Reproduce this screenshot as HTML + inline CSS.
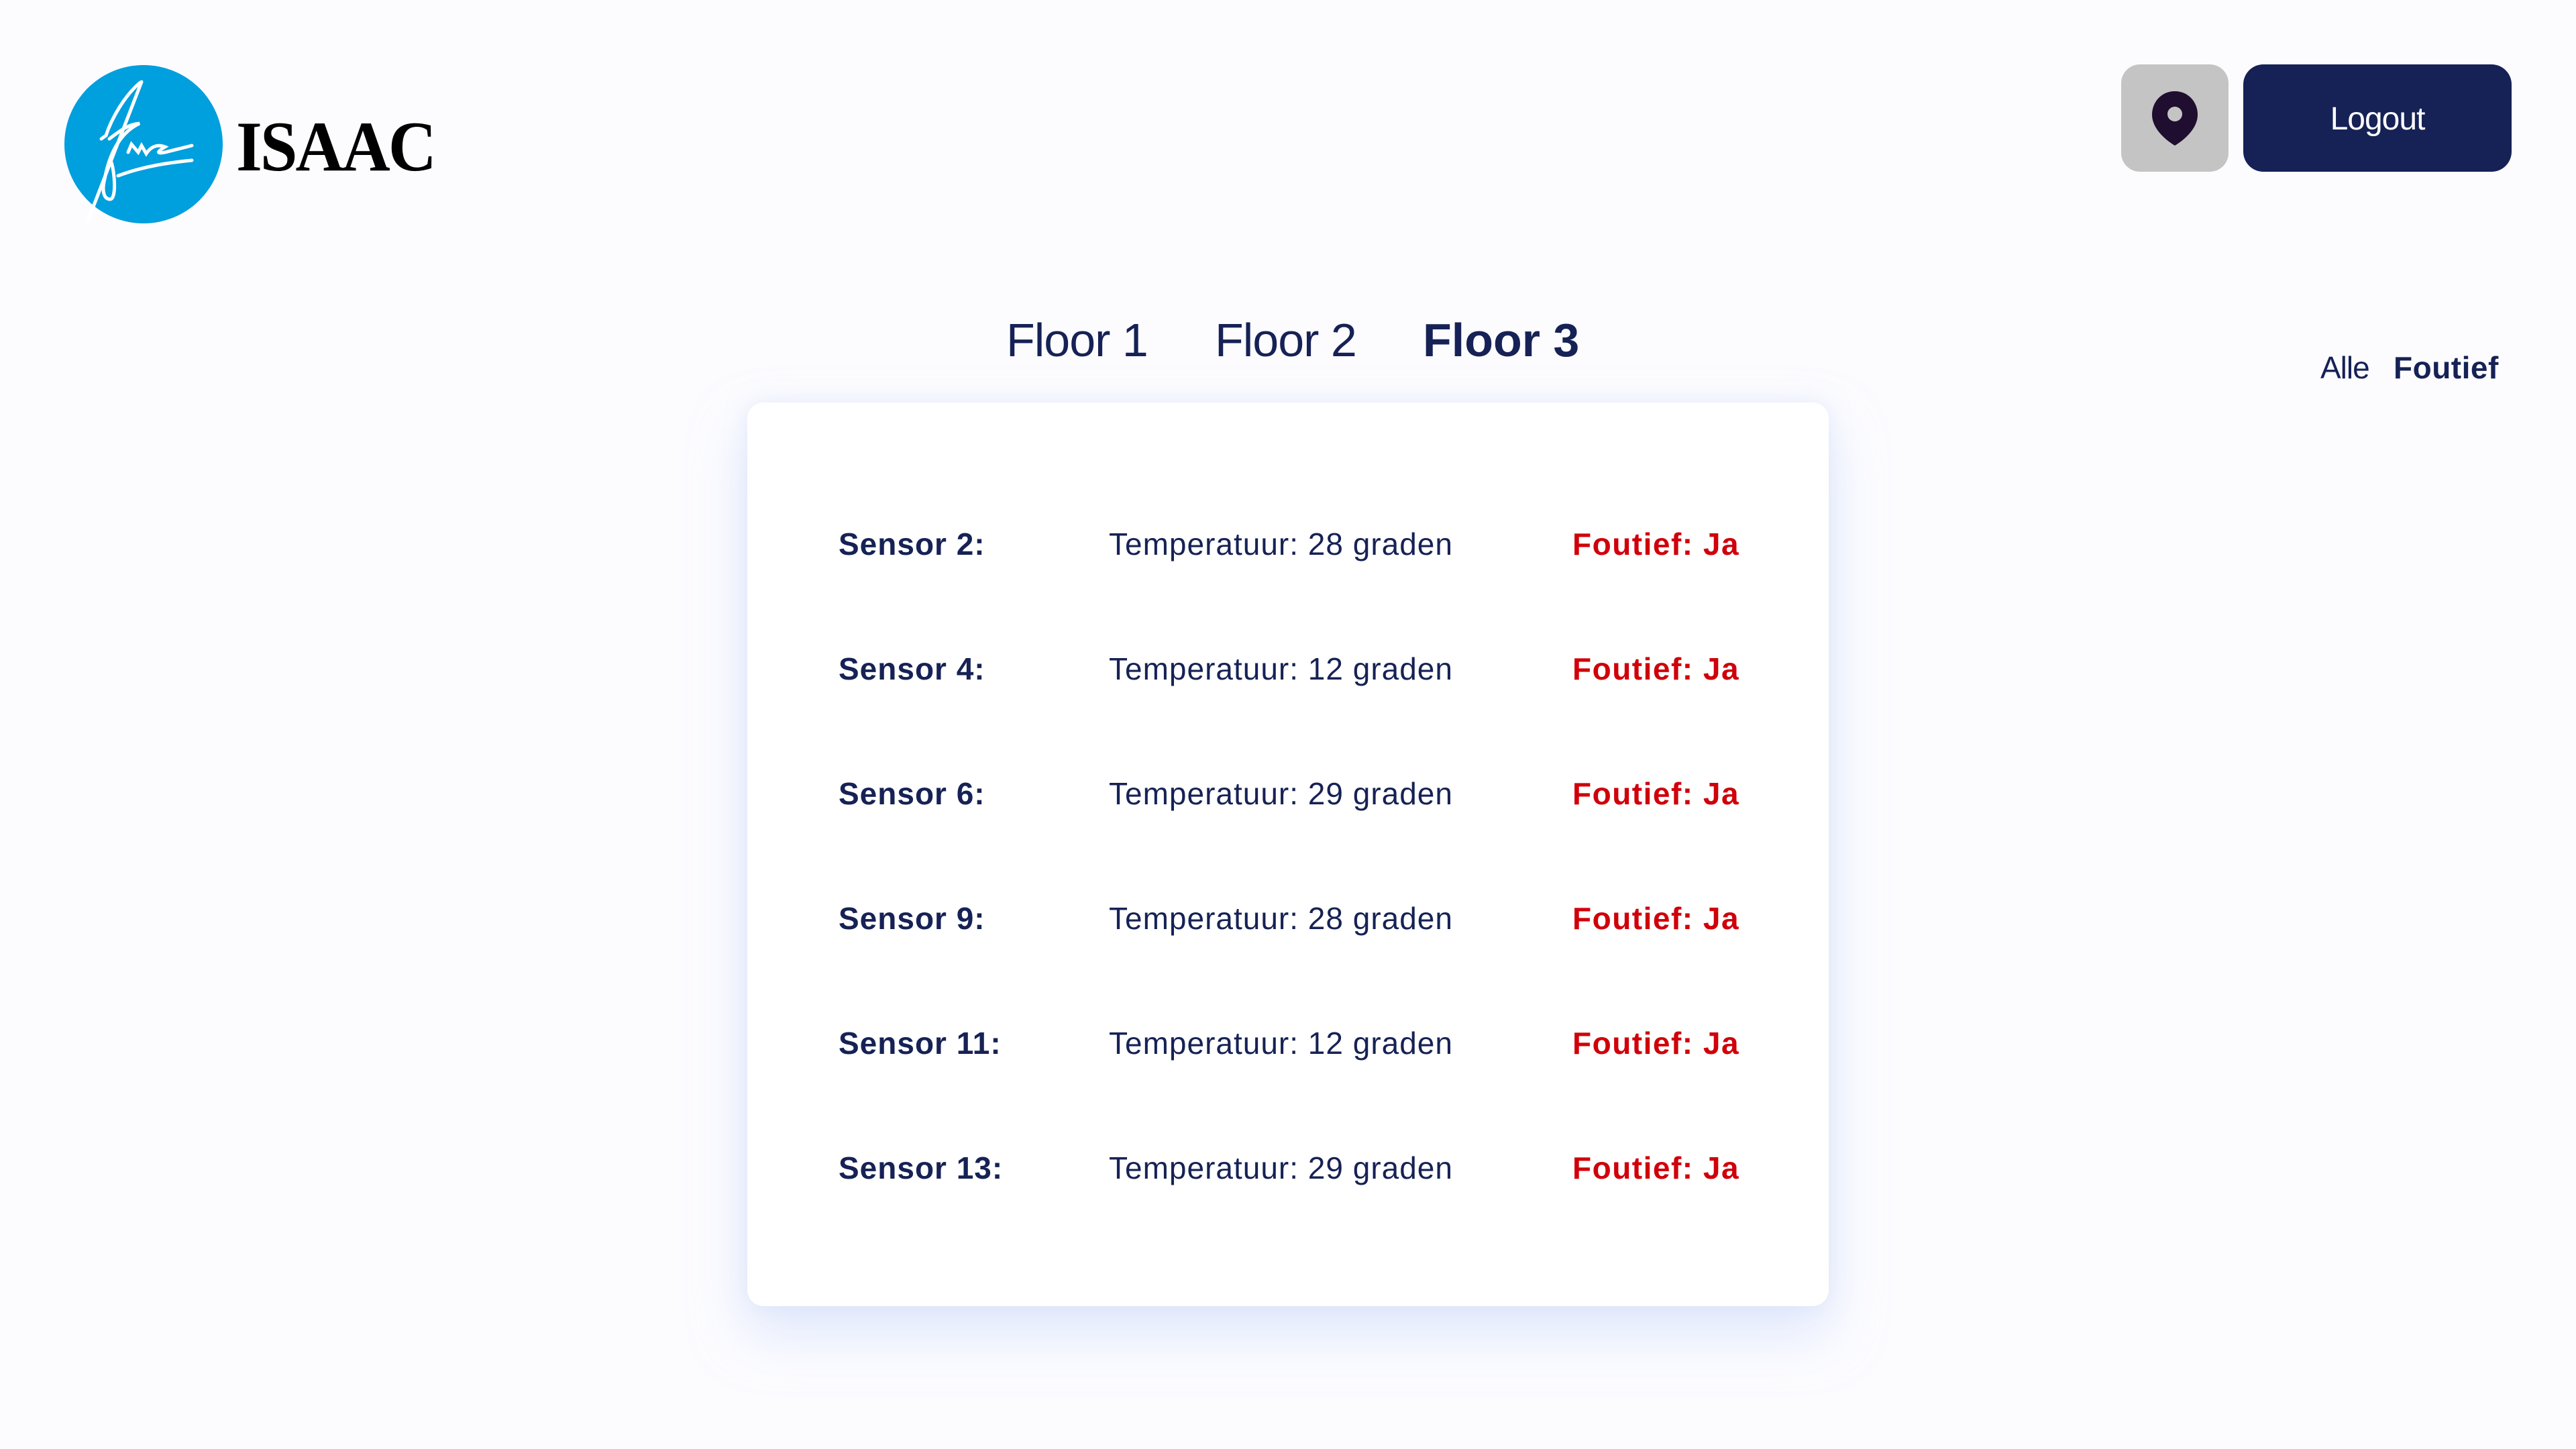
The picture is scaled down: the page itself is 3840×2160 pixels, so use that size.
<!DOCTYPE html>
<html><head><meta charset="utf-8"><style>
*{margin:0;padding:0;box-sizing:border-box}
body{width:3840px;height:2160px;background:#fcfcff;font-family:"Liberation Sans",sans-serif;color:#162255;position:relative;overflow:hidden}
.a{position:absolute;white-space:nowrap}
.card{position:absolute;left:1114px;top:600px;width:1612px;height:1347px;background:#fff;border-radius:24px;box-shadow:0 40px 80px rgba(200,215,250,.55),0 0 30px rgba(220,228,250,.5)}
.s{font-weight:bold;font-size:46px;letter-spacing:1px}
.t{font-size:46px;letter-spacing:1px}
.f{font-weight:bold;font-size:46px;color:#d0000a;letter-spacing:1.5px}
</style></head><body>
<svg class="a" style="left:96px;top:97px" width="236" height="236" viewBox="0 0 236 236">
<circle cx="118" cy="118" r="118" fill="#009fde"/>
<g fill="none" stroke="#fff" stroke-width="5" stroke-linecap="round">
<path d="M115 25 L30 245"/>
<path d="M113 26 C90 45 70 80 62 105 L55 110"/>
<path d="M67 110 C80 100 95 88 112 87 C95 95 70 115 60 170 C55 190 60 200 68 200 C78 200 75 160 70 145"/>
<path d="M95 130 L100 118 L110 130 L115 120 L122 132 C130 120 140 118 150 122 C140 128 135 133 150 130 L190 120"/>
<path d="M80 165 C120 150 160 145 190 142"/>
</g></svg>
<div class="a" style="left:352px;top:158px;font-family:'Liberation Serif',serif;font-weight:bold;font-size:106px;color:#000;letter-spacing:-3px;transform:scaleX(0.94);transform-origin:left">ISAAC</div>

<div class="a" style="left:3162px;top:96px;width:160px;height:160px;background:#c4c4c4;border-radius:28px"></div>
<svg class="a" style="left:3207px;top:136px" width="70" height="82" viewBox="0 0 70 82">
<path d="M35 0 C15 0 1 16 1 35 C1 55 20 72 35 81 C50 72 69 55 69 35 C69 16 55 0 35 0Z" fill="#1f0e2f"/>
<circle cx="35" cy="34" r="11" fill="#c4c4c4"/></svg>
<div class="a" style="left:3344px;top:96px;width:400px;height:160px;background:#162255;border-radius:30px;color:#fff;font-size:48px;line-height:164px;text-align:center;letter-spacing:-1px">Logout</div>

<div class="a" style="left:1500px;top:467px;font-size:70px;letter-spacing:-1px">Floor 1</div>
<div class="a" style="left:1811px;top:467px;font-size:70px;letter-spacing:-1px">Floor 2</div>
<div class="a" style="left:2121px;top:467px;font-size:70px;font-weight:bold;letter-spacing:0px">Floor 3</div>

<div class="a" style="left:3459px;top:521px;font-size:46px;letter-spacing:-1px">Alle</div>
<div class="a" style="left:3568px;top:521px;font-size:46px;font-weight:bold;letter-spacing:0.5px">Foutief</div>

<div class="card"></div>
<div class="a s" style="left:1250px;top:784px">Sensor 2:</div><div class="a t" style="left:1653px;top:784px">Temperatuur: 28 graden</div><div class="a f" style="left:2344px;top:784px">Foutief: Ja</div>
<div class="a s" style="left:1250px;top:970px">Sensor 4:</div><div class="a t" style="left:1653px;top:970px">Temperatuur: 12 graden</div><div class="a f" style="left:2344px;top:970px">Foutief: Ja</div>
<div class="a s" style="left:1250px;top:1156px">Sensor 6:</div><div class="a t" style="left:1653px;top:1156px">Temperatuur: 29 graden</div><div class="a f" style="left:2344px;top:1156px">Foutief: Ja</div>
<div class="a s" style="left:1250px;top:1342px">Sensor 9:</div><div class="a t" style="left:1653px;top:1342px">Temperatuur: 28 graden</div><div class="a f" style="left:2344px;top:1342px">Foutief: Ja</div>
<div class="a s" style="left:1250px;top:1528px">Sensor 11:</div><div class="a t" style="left:1653px;top:1528px">Temperatuur: 12 graden</div><div class="a f" style="left:2344px;top:1528px">Foutief: Ja</div>
<div class="a s" style="left:1250px;top:1714px">Sensor 13:</div><div class="a t" style="left:1653px;top:1714px">Temperatuur: 29 graden</div><div class="a f" style="left:2344px;top:1714px">Foutief: Ja</div>
</body></html>
